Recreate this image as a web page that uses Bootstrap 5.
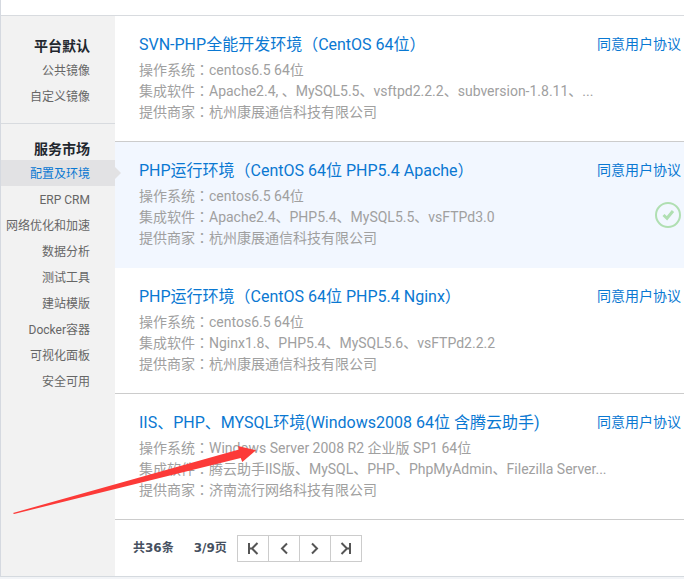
<!DOCTYPE html>
<html lang="zh-CN">
<head>
<meta charset="utf-8">
<meta name="viewport" content="width=device-width, initial-scale=1">
<title>镜像市场</title>
<link href="https://cdn.jsdelivr.net/npm/bootstrap@5.3.0/dist/css/bootstrap.min.css" rel="stylesheet">
<style>
  body { font-family: Roboto, "Noto Sans CJK SC", sans-serif; font-size: 14px; line-height: 21px; color: #a0a0a0; background: #f2f4f7; }
  a { text-decoration: none; color: #0a78d2; }
  .market { border-left: 1px solid #d5d9e0; border-bottom: 1px solid #d5dadf; background: #fff; }
  .market-top { height: 16px; border-bottom: 1px solid #d8dbdf; }
  .side { flex: 0 0 114px; background: #f2f2f2; }
  .side-group { padding-top: 14px; }
  .side-group:first-child { padding-top: 19px; padding-bottom: 14px; border-bottom: 1px solid #d8dbdf; }
  .side-title { font-size: 14px; line-height: 22px; font-weight: 700; color: #22272e; padding-right: 25px; margin: 0; }
  .side-link { display: block; position: relative; font-size: 12px; line-height: 24px; color: #666; padding: 2px 25px 0 0; white-space: nowrap; }
  .side-link.active { background: #e2e2e4; color: #0a78d2; }
  .side-link.active::after { content: ""; position: absolute; left: 100%; top: 7px; border: 6px solid transparent; border-left-color: #e2e2e4; border-right-width: 0; }
  .content-col { min-width: 0; }
  .image-item { padding: 17px 3px 18px 24px; border-bottom: 1px solid #ccc; }
  .image-item.selected { background: #f2f7ff; border-color: #f2f7ff; }
  .image-title { font-size: 16px; line-height: 24px; font-weight: 400; margin: 0 0 3px; }
  .agree { line-height: 22px; }
  .colon { font-family: Roboto, "Noto Sans CJK TC", sans-serif; }
  .tick { margin-top: 21px; }
  .pager { padding: 15px 18px 14px; font-family: "DejaVu Sans", "Noto Sans CJK SC", sans-serif; font-size: 12px; font-weight: 700; color: #465060; }
  .pager-count { margin-right: 20px; }
  .pager-page { margin-right: 10px; }
  .pager-btn { width: 32px; height: 27px; padding: 0; margin-left: -1px; border: 1px solid #ccc; background: #fff; line-height: 0; }
  .pager-btn:first-child { margin-left: 0; }
  .pointer-arrow { position: absolute; left: 0; top: 440px; pointer-events: none; }
</style>
<script src="https://cdn.jsdelivr.net/npm/bootstrap@5.3.0/dist/js/bootstrap.bundle.min.js"></script>
</head>
<body>
<div class="market position-relative">
  <div class="market-top"></div>
  <div class="d-flex">
    <nav class="side text-end" aria-label="镜像分类">
      <div class="side-group">
        <h2 class="side-title">平台默认</h2>
        <a class="side-link" href="#">公共镜像</a>
        <a class="side-link" href="#">自定义镜像</a>
      </div>
      <div class="side-group">
        <h2 class="side-title">服务市场</h2>
        <a class="side-link active" href="#" aria-current="page">配置及环境</a>
        <a class="side-link" href="#">ERP CRM</a>
        <a class="side-link" href="#">网络优化和加速</a>
        <a class="side-link" href="#">数据分析</a>
        <a class="side-link" href="#">测试工具</a>
        <a class="side-link" href="#">建站模版</a>
        <a class="side-link" href="#">Docker容器</a>
        <a class="side-link" href="#">可视化面板</a>
        <a class="side-link" href="#">安全可用</a>
      </div>
    </nav>
    <main class="content-col flex-grow-1">
      <article class="image-item d-flex justify-content-between">
        <div class="content-col text-nowrap">
          <h3 class="image-title"><a href="#">SVN-PHP全能开发环境（CentOS 64位）</a></h3>
          <div>操作系统<span class="colon" lang="zh-TW">：</span>centos6.5 64位</div>
          <div>集成软件<span class="colon" lang="zh-TW">：</span>Apache2.4, 、MySQL5.5、vsftpd2.2.2、subversion-1.8.11、...</div>
          <div>提供商家<span class="colon" lang="zh-TW">：</span>杭州康展通信科技有限公司</div>
        </div>
        <a class="agree text-nowrap" href="#">同意用户协议</a>
      </article>
      <article class="image-item selected d-flex justify-content-between">
        <div class="content-col text-nowrap">
          <h3 class="image-title"><a href="#">PHP运行环境（CentOS 64位 PHP5.4 Apache）</a></h3>
          <div>操作系统<span class="colon" lang="zh-TW">：</span>centos6.5 64位</div>
          <div>集成软件<span class="colon" lang="zh-TW">：</span>Apache2.4、PHP5.4、MySQL5.5、vsFTPd3.0</div>
          <div>提供商家<span class="colon" lang="zh-TW">：</span>杭州康展通信科技有限公司</div>
        </div>
        <div class="d-flex flex-column align-items-end">
          <a class="agree text-nowrap" href="#">同意用户协议</a>
          <svg class="tick" width="26" height="26" viewBox="0 0 26 26" fill="none" stroke="#b0dfb2" role="img" aria-label="已选择"><circle cx="13" cy="13" r="12" stroke-width="2"/><path d="M8.500 13l3.500 3.300 6-7.300" stroke-width="3"/></svg>
        </div>
      </article>
      <article class="image-item d-flex justify-content-between">
        <div class="content-col text-nowrap">
          <h3 class="image-title"><a href="#">PHP运行环境（CentOS 64位 PHP5.4 Nginx）</a></h3>
          <div>操作系统<span class="colon" lang="zh-TW">：</span>centos6.5 64位</div>
          <div>集成软件<span class="colon" lang="zh-TW">：</span>Nginx1.8、PHP5.4、MySQL5.6、vsFTPd2.2.2</div>
          <div>提供商家<span class="colon" lang="zh-TW">：</span>杭州康展通信科技有限公司</div>
        </div>
        <a class="agree text-nowrap" href="#">同意用户协议</a>
      </article>
      <article class="image-item d-flex justify-content-between">
        <div class="content-col text-nowrap">
          <h3 class="image-title"><a href="#">IIS、PHP、MYSQL环境(Windows2008 64位 含腾云助手)</a></h3>
          <div>操作系统<span class="colon" lang="zh-TW">：</span>Windows Server 2008 R2 企业版 SP1 64位</div>
          <div>集成软件<span class="colon" lang="zh-TW">：</span>腾云助手IIS版、MySQL、PHP、PhpMyAdmin、Filezilla Server...</div>
          <div>提供商家<span class="colon" lang="zh-TW">：</span>济南流行网络科技有限公司</div>
        </div>
        <a class="agree text-nowrap" href="#">同意用户协议</a>
      </article>
      <div class="pager d-flex align-items-center">
        <span class="pager-count">共36条</span>
        <span class="pager-page">3/9页</span>
        <div class="d-flex">
          <button class="pager-btn" type="button" aria-label="首页"><svg width="14" height="13" viewBox="0 0 14 13" fill="none" stroke="#555" stroke-width="2"><path d="M3 1v11M11.500 1L6 6.500 11.500 12M3 6.500h3"/></svg></button>
          <button class="pager-btn" type="button" aria-label="上一页"><svg width="14" height="13" viewBox="0 0 14 13" fill="none" stroke="#555" stroke-width="2"><path d="M10 1.500l-5 5 5 5"/></svg></button>
          <button class="pager-btn" type="button" aria-label="下一页"><svg width="14" height="13" viewBox="0 0 14 13" fill="none" stroke="#555" stroke-width="2"><path d="M4 1.500l5 5-5 5"/></svg></button>
          <button class="pager-btn" type="button" aria-label="末页"><svg width="14" height="13" viewBox="0 0 14 13" fill="none" stroke="#555" stroke-width="2"><path d="M11 1v11M2.500 1L8 6.500 2.500 12M8 6.500h3"/></svg></button>
        </div>
      </div>
    </main>
  </div>
  <svg class="pointer-arrow" width="260" height="80" viewBox="1 440 260 80" aria-hidden="true"><path fill="#fc3a38" d="M13 513L239 449.500 238 446 256 450.300 242.300 462 240.700 458 14 514z"/></svg>
</div>
</body>
</html>
